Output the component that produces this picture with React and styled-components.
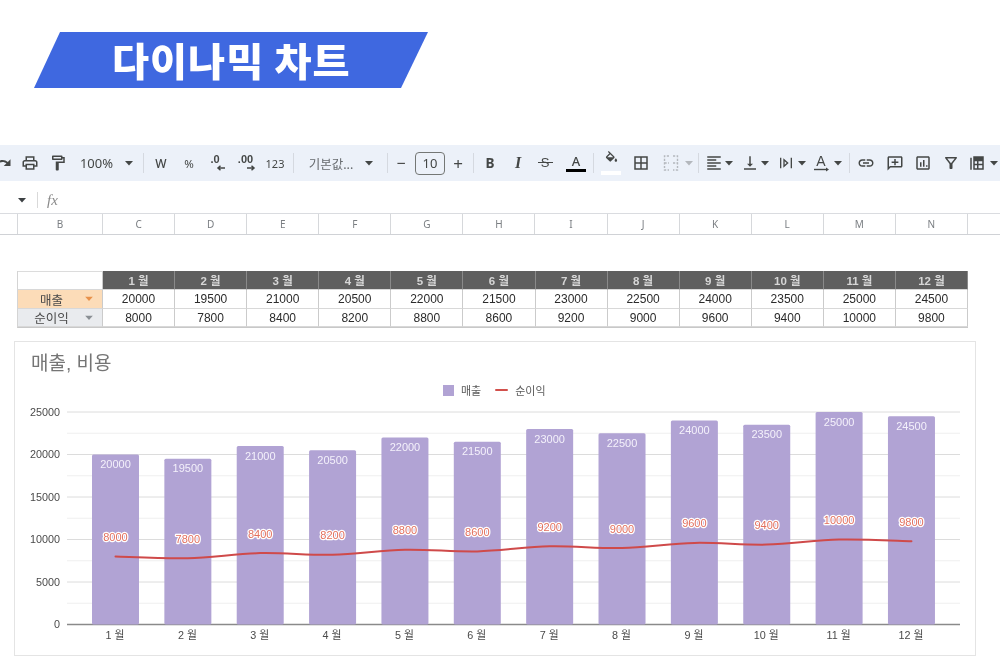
import React from 'react';
import styled, { createGlobalStyle } from 'styled-components';

const MONTHS = ['1 월', '2 월', '3 월', '4 월', '5 월', '6 월', '7 월', '8 월', '9 월', '10 월', '11 월', '12 월'];
const SALES = [20000, 19500, 21000, 20500, 22000, 21500, 23000, 22500, 24000, 23500, 25000, 24500];
const PROFIT = [8000, 7800, 8400, 8200, 8800, 8600, 9200, 9000, 9600, 9400, 10000, 9800];
const COLUMNS = ['B', 'C', 'D', 'E', 'F', 'G', 'H', 'I', 'J', 'K', 'L', 'M', 'N'];

const PATHS = {
    redo: 'M18.4 10.6C16.55 8.99 14.15 8 11.5 8c-4.65 0-8.58 3.03-9.96 7.22L3.9 16c1.05-3.19 4.05-5.5 7.6-5.5 1.95 0 3.73.72 5.12 1.88L13 16h9V7l-3.6 3.6z',
    print: 'M19 8h-1V3H6v5H5c-1.66 0-3 1.34-3 3v6h4v4h12v-4h4v-6c0-1.66-1.34-3-3-3zM8 5h8v3H8V5zm8 12v2H8v-4h8v2zm2-2v-2H6v2H4v-4c0-.55.45-1 1-1h14c.55 0 1 .45 1 1v4h-2z',
    paint: 'M18 4V3c0-.55-.45-1-1-1H5c-.55 0-1 .45-1 1v4c0 .55.45 1 1 1h12c.55 0 1-.45 1-1V6h1v4H9v11c0 .55.45 1 1 1h2c.55 0 1-.45 1-1v-9h8V4h-3zm-2 2H6V4h10v2z',
    fill: 'M16.56 8.94L7.62 0 6.21 1.41l2.38 2.38-5.15 5.15c-.59.59-.59 1.54 0 2.12l5.5 5.5c.29.29.68.44 1.06.44s.77-.15 1.06-.44l5.5-5.5c.59-.58.59-1.53 0-2.12zM5.21 10L10 5.21 14.79 10H5.21zM19 11.5s-2 2.17-2 3.5c0 1.1.9 2 2 2s2-.9 2-2c0-1.33-2-3.5-2-3.5z',
    borders: 'M3 3v18h18V3H3zm8 16H5v-6h6v6zm0-8H5V5h6v6zm8 8h-6v-6h6v6zm0-8h-6V5h6v6z',
    align: 'M15 15H3v2h12v-2zm0-8H3v2h12V7zM3 13h18v-2H3v2zm0 8h18v-2H3v2zM3 3v2h18V3H3z',
    valign: 'M16 13h-3V3h-2v10H8l4 4 4-4zM4 19v2h16v-2H4z',
    link: 'M3.9 12c0-1.71 1.39-3.1 3.1-3.1h4V7H7c-2.76 0-5 2.24-5 5s2.24 5 5 5h4v-1.9H7c-1.71 0-3.1-1.39-3.1-3.1zM8 13h8v-2H8v2zm9-6h-4v1.9h4c1.71 0 3.1 1.39 3.1 3.1s-1.39 3.1-3.1 3.1h-4V17h4c2.76 0 5-2.24 5-5s-2.24-5-5-5z',
    comment: 'M20 3H4c-1.1 0-2 .9-2 2v17l4-4h14c1.1 0 2-.9 2-2V5c0-1.1-.9-2-2-2zm0 13H5.17L4 17.17V5h16v11zM11 6.5h2V10h3.5v2H13v3h-2v-3H7.5v-2H11z',
    chart: 'M19 3H5c-1.1 0-2 .9-2 2v14c0 1.1.9 2 2 2h14c1.1 0 2-.9 2-2V5c0-1.1-.9-2-2-2zm0 16H5V5h14v14zM8 11h2v6H8zm4-3h2v9h-2zm4 7h2v2h-2z',
    filter: 'M7 6h10l-5.01 6.3L7 6zm-2.75-.39C6.27 8.2 10 13 10 13v6c0 .55.45 1 1 1h2c.55 0 1-.45 1-1v-6s3.73-4.8 5.75-7.39C20.26 4.95 19.79 4 18.95 4H5.04c-.83 0-1.3.95-.79 1.61z',
    wrap: 'M3 4h2v16H3zM19 4h2v16h-2zM8 5l8 7-8 7zm2 4.4v5.2l3-2.6z',
    table: 'M7 3h14v18H7zm2 6.5v3.5h3V9.5zm5 0v3.5h5V9.5zM9 15v4h3v-4zm5 0v4h5v-4zM3 5h2v16H3z'
};

const GlobalStyle = createGlobalStyle`
    html, body {
        margin: 0;
        padding: 0;
        background-color: #ffffff;
    }
    body {
        font-family: "Liberation Sans", "Noto Sans CJK KR", sans-serif;
    }
`;

const Icon = ({ name, size = 18, color = '#444746' }) => (
    <svg width={size} height={size} viewBox="0 0 24 24" fill={color} fillRule="evenodd">
        <path d={PATHS[name]} />
    </svg>
);

const Caret = ({ color = '#444746' }) => (
    <svg width="8" height="5" viewBox="0 0 8 5" fill={color}>
        <path d="M0 0h8L4 4.5z" />
    </svg>
);

// decimal buttons: digits with a small arrow at their lower right
const DecimalIcon = ({ label, right }) => (
    <svg width="24" height="20" viewBox="0 0 24 20">
        <text x={right ? 11.5 : 10} y="10" textAnchor="middle" fontSize="11" fontWeight="700" fill="#444746" fontFamily="Liberation Sans">{label}</text>
        {right
            ? <path d="M13 15h7M17.5 12.8l2.5 2.2-2.5 2.2" stroke="#444746" strokeWidth="1.5" fill="none" />
            : <path d="M20 15h-7M15.5 12.8L13 15l2.5 2.2" stroke="#444746" strokeWidth="1.5" fill="none" />}
    </svg>
);

const MergeIcon = () => (
    <svg width="18" height="18" viewBox="0 0 18 18" fill="none" stroke="#b4b8bd" strokeWidth="1.4" strokeDasharray="2.2 1.4">
        <path d="M7 2H2.5v14H7M11 2h4.5v14H11" />
        <path d="M2.5 9H7M11 9h4.5" />
    </svg>
);

const RotateIcon = () => (
    <svg width="18" height="20" viewBox="0 0 18 20">
        <text x="8" y="13" textAnchor="middle" fontSize="14" fill="#444746" fontFamily="Liberation Sans">A</text>
        <path d="M1 16.5h12" stroke="#444746" strokeWidth="1.4" />
        <path d="M13 14.5l3 2-3 2z" fill="#444746" />
    </svg>
);

// c is the centre of the item on the page, w its width
const buildTools = () => [
    { c: 3, w: 18, el: <Icon name="redo" /> },
    { c: 30, w: 18, el: <Icon name="print" /> },
    { c: 58, w: 18, el: <Icon name="paint" /> },
    { c: 96.5, w: 36, el: <ToolText $size={13}>100%</ToolText> },
    { c: 129, w: 8, el: <Caret /> },
    { c: 143, w: 1, el: <Divider /> },
    { c: 161, w: 16, el: <ToolText $size={12} $weight={500}>W</ToolText> },
    { c: 189, w: 16, el: <ToolText $size={11.5}>%</ToolText> },
    { c: 217, w: 24, el: <DecimalIcon label=".0" /> },
    { c: 246, w: 24, el: <DecimalIcon label=".00" right /> },
    { c: 275, w: 22, el: <ToolText $size={11}>123</ToolText> },
    { c: 293, w: 1, el: <Divider /> },
    { c: 331, w: 50, el: <ToolText $size={12.5} $color="#666a6e">기본값...</ToolText> },
    { c: 369, w: 8, el: <Caret /> },
    { c: 387, w: 1, el: <Divider /> },
    { c: 401, w: 12, el: <ToolText $size={16}>−</ToolText> },
    { c: 430, w: 30, el: <SizeBox>10</SizeBox> },
    { c: 458, w: 14, el: <ToolText $size={17}>+</ToolText> },
    { c: 473, w: 1, el: <Divider /> },
    { c: 490, w: 14, el: <ToolText $size={13.5} $weight={700}>B</ToolText> },
    { c: 518, w: 14, el: <ToolText $size={16} $weight={700} $italic $serif>I</ToolText> },
    { c: 545, w: 15, el: <StrikeGlyph>S</StrikeGlyph> },
    { c: 576, w: 20, el: <TextColor>A</TextColor> },
    { c: 593, w: 1, el: <Divider /> },
    { c: 611, w: 20, el: <FillColor><Icon name="fill" size={15} /></FillColor> },
    { c: 641, w: 18, el: <Icon name="borders" /> },
    { c: 671, w: 18, el: <MergeIcon /> },
    { c: 689, w: 8, el: <Caret color="#b4b8bd" /> },
    { c: 698, w: 1, el: <Divider /> },
    { c: 714, w: 18, el: <Icon name="align" /> },
    { c: 729, w: 8, el: <Caret /> },
    { c: 750, w: 18, el: <Icon name="valign" /> },
    { c: 765, w: 8, el: <Caret /> },
    { c: 786, w: 16, el: <Icon name="wrap" size={16} /> },
    { c: 802, w: 8, el: <Caret /> },
    { c: 822, w: 18, el: <RotateIcon /> },
    { c: 838, w: 8, el: <Caret /> },
    { c: 849, w: 1, el: <Divider /> },
    { c: 866, w: 18, el: <Icon name="link" /> },
    { c: 895, w: 18, el: <Icon name="comment" /> },
    { c: 923, w: 18, el: <Icon name="chart" /> },
    { c: 951, w: 18, el: <Icon name="filter" /> },
    { c: 977, w: 18, el: <Icon name="table" /> },
    { c: 994, w: 8, el: <Caret /> }
];

// turn the wanted centres into a left gap for each item
function placeTools() {
    let right = 0;
    return buildTools().map((tool) => {
        const left = tool.c - tool.w / 2;
        const gap = left - right;
        right = left + tool.w;
        return { ...tool, gap };
    });
}

// chart geometry, in page pixels (the svg viewBox starts at the card's inner corner)
const BASE_Y = 624.5;
const MAX_Y = 412;
const valueY = (v) => BASE_Y - (v / 25000) * (BASE_Y - MAX_Y);
const barX = (i) => 115.5 + i * 72.36;

function smoothLine(values) {
    const pts = values.map((v, i) => [barX(i), valueY(v)]);
    let d = `M${pts[0][0]} ${pts[0][1]}`;
    for (let i = 0; i < pts.length - 1; i++) {
        const p0 = pts[i - 1] || pts[i];
        const p1 = pts[i];
        const p2 = pts[i + 1];
        const p3 = pts[i + 2] || p2;
        const c1x = p1[0] + (p2[0] - p0[0]) / 6;
        const c1y = p1[1] + (p2[1] - p0[1]) / 6;
        const c2x = p2[0] - (p3[0] - p1[0]) / 6;
        const c2y = p2[1] - (p3[1] - p1[1]) / 6;
        d += ` C${c1x} ${c1y} ${c2x} ${c2y} ${p2[0]} ${p2[1]}`;
    }
    return d;
}

function ComboChart() {
    const grid = [];
    for (let v = 0; v <= 25000; v += 2500) grid.push(v);
    return (
        <ChartSvg viewBox="15 400 960 255" width="960" height="255">
            {grid.map((v) => (
                <line
                    key={v}
                    x1="67"
                    x2="960"
                    y1={valueY(v)}
                    y2={valueY(v)}
                    stroke={v === 0 ? '#8a8a8a' : v % 5000 === 0 ? '#dcdcdc' : '#efefef'}
                    strokeWidth={v === 0 ? 1.5 : 1}
                />
            ))}
            {[0, 5000, 10000, 15000, 20000, 25000].map((v) => (
                <AxisText key={v} x="60" y={valueY(v) + 3.5} textAnchor="end">{v}</AxisText>
            ))}
            {SALES.map((v, i) => (
                <g key={MONTHS[i]}>
                    <rect x={barX(i) - 23.5} y={valueY(v)} width="47" height={BASE_Y - valueY(v)} rx="1.5" fill="#b1a3d4" />
                    <BarLabel x={barX(i)} y={valueY(v) + 13.5} textAnchor="middle">{v}</BarLabel>
                    <AxisText x={barX(i) - 0.5} y="638.5" textAnchor="middle">{MONTHS[i]}</AxisText>
                </g>
            ))}
            <path d={smoothLine(PROFIT)} fill="none" stroke="#cf4a4a" strokeWidth="2" strokeLinecap="round" />
            {PROFIT.map((v, i) => (
                <LineLabel key={i} x={barX(i)} y={valueY(v) - 15.5} textAnchor="middle">{v}</LineLabel>
            ))}
        </ChartSvg>
    );
}

export default function App() {
    return (
        <Page>
            <GlobalStyle />
            <Banner>
                <BannerTitle>다이나믹 차트</BannerTitle>
            </Banner>

            <Toolbar>
                {placeTools().map((tool) => (
                    <ToolSlot key={tool.c} $w={tool.w} $gap={tool.gap}>{tool.el}</ToolSlot>
                ))}
            </Toolbar>

            <FormulaBar>
                <Caret color="#3c4043" />
                <FormulaDivider />
                <FxLabel>fx</FxLabel>
            </FormulaBar>

            <ColumnHeader>
                <ColumnCell />
                {COLUMNS.map((c) => <ColumnCell key={c}>{c}</ColumnCell>)}
                <ColumnCell />
            </ColumnHeader>

            <DataTable>
                <CornerCell />
                {MONTHS.map((m) => <MonthCell key={m}>{m}</MonthCell>)}

                <LabelCell $bg="#fcdcb8">
                    매출
                    <LabelCaret><Caret color="#e8914a" /></LabelCaret>
                </LabelCell>
                {SALES.map((v, i) => <ValueCell key={i}>{v}</ValueCell>)}

                <LabelCell $bg="#e9ebee">
                    순이익
                    <LabelCaret><Caret color="#8a8f94" /></LabelCaret>
                </LabelCell>
                {PROFIT.map((v, i) => <ValueCell key={i}>{v}</ValueCell>)}
            </DataTable>

            <ChartCard>
                <ChartTitle>매출, 비용</ChartTitle>
                <Legend>
                    <LegendSwatch />
                    <LegendText>매출</LegendText>
                    <LegendLine />
                    <LegendText>순이익</LegendText>
                </Legend>
                <ComboChart />
            </ChartCard>
        </Page>
    );
}

/* Styled Components */
const Page = styled.div`
    width: 1000px;
    height: 667px;
    overflow: hidden;
    padding-top: 32px;
    box-sizing: border-box;
    background-color: #ffffff;
    filter: blur(0.3px);
`;

const Banner = styled.div`
    width: 394px;
    height: 56px;
    margin-left: 34px;
    display: flex;
    align-items: center;
    justify-content: center;
    background-color: #3f68e0;
    clip-path: polygon(26px 0, 100% 0, 367px 100%, 0 100%);
`;

const BannerTitle = styled.div`
    font-family: "Noto Sans CJK KR", sans-serif;
    font-size: 42px;
    font-weight: 900;
    line-height: 56px;
    color: #ffffff;
    letter-spacing: 1px;
    transform: translateY(-1px) scale(0.96, 0.92);
`;

const Toolbar = styled.div`
    height: 36px;
    margin-top: 57px;
    display: flex;
    align-items: center;
    overflow: hidden;
    background-color: #ecf1f9;
`;

const ToolSlot = styled.div`
    flex: none;
    width: ${(p) => p.$w}px;
    margin-left: ${(p) => p.$gap}px;
    display: flex;
    align-items: center;
    justify-content: center;
`;

const ToolText = styled.span`
    font-family: ${(p) => (p.$serif ? '"Liberation Serif", serif' : '"Noto Sans", "Noto Sans CJK KR", sans-serif')};
    font-size: ${(p) => p.$size}px;
    font-weight: ${(p) => p.$weight || 400};
    font-style: ${(p) => (p.$italic ? 'italic' : 'normal')};
    color: ${(p) => p.$color || '#444746'};
    white-space: nowrap;
`;

const Divider = styled.div`
    width: 1px;
    height: 20px;
    background-color: #d5d9e0;
`;

const SizeBox = styled.div`
    width: 30px;
    height: 23px;
    box-sizing: border-box;
    border: 1px solid #747775;
    border-radius: 4px;
    display: flex;
    align-items: center;
    justify-content: center;
    font-family: "Noto Sans", sans-serif;
    font-size: 13px;
    color: #444746;
`;

const StrikeGlyph = styled.span`
    font-size: 13px;
    line-height: 16px;
    color: #444746;
    width: 15px;
    text-align: center;
    background: linear-gradient(#444746, #444746) center / 100% 1.4px no-repeat;
`;

const TextColor = styled.div`
    width: 20px;
    display: flex;
    flex-direction: column;
    align-items: center;
    font-family: "Noto Sans", sans-serif;
    font-size: 13px;
    font-weight: 500;
    line-height: 15px;
    color: #444746;
    border-bottom: 3.5px solid #000000;
`;

const FillColor = styled.div`
    width: 20px;
    height: 24px;
    display: flex;
    justify-content: center;
    background: linear-gradient(#ffffff, #ffffff) bottom / 100% 4px no-repeat;
`;

const FormulaBar = styled.div`
    height: 32px;
    box-sizing: border-box;
    padding: 6px 0 0 18px;
    display: flex;
    align-items: center;
    background-color: #ffffff;
`;

const FormulaDivider = styled.div`
    width: 1px;
    height: 16px;
    margin-left: 11px;
    background-color: #d9d9d9;
`;

const FxLabel = styled.span`
    margin-left: 9px;
    font-family: "Liberation Serif", serif;
    font-style: italic;
    font-size: 15px;
    color: #8a8a8a;
`;

const ColumnHeader = styled.div`
    height: 22px;
    box-sizing: border-box;
    display: grid;
    grid-template-columns: 18px 85px repeat(12, 72.08px) 1fr;
    border-top: 1px solid #dadce0;
    border-bottom: 1px solid #d0d2d6;
`;

const ColumnCell = styled.div`
    display: flex;
    align-items: center;
    justify-content: center;
    border-right: 1px solid #d6d8db;
    font-family: "Noto Sans", sans-serif;
    font-size: 10px;
    color: #7a7e82;

    &:last-child {
        border-right: none;
    }
`;

const DataTable = styled.div`
    width: 951px;
    margin: 36px 0 0 17px;
    display: grid;
    grid-template-columns: 85px repeat(12, 1fr);
    grid-template-rows: 19px 19px 18px;
    box-sizing: border-box;
    border-left: 1px solid #d4d4d4;
    border-bottom: 1px solid #c8c8c8;
`;

const TableCell = styled.div`
    display: flex;
    align-items: center;
    justify-content: center;
    box-sizing: border-box;
    border-right: 1px solid #cbcbcb;
    border-bottom: 1px solid #d8d8d8;
    font-size: 12px;
`;

const CornerCell = styled(TableCell)`
    border-top: 1px solid #dcdcdc;
`;

const MonthCell = styled(TableCell)`
    background-color: #5f5f5f;
    color: #d6d6d6;
    font-weight: 700;
    font-size: 11.5px;
    border-right-color: #8a8a8a;
`;

const LabelCell = styled(TableCell)`
    position: relative;
    padding-right: 17px;
    background-color: ${(p) => p.$bg};
    color: #4a4a4a;
    font-size: 12.5px;
`;

const LabelCaret = styled.span`
    position: absolute;
    right: 9px;
    top: 50%;
    display: flex;
    transform: translateY(-50%);
`;

const ValueCell = styled(TableCell)`
    color: #2b2b2b;
`;

const ChartCard = styled.div`
    width: 962px;
    height: 315px;
    margin: 13px 0 0 14px;
    box-sizing: border-box;
    border: 1px solid #e4e4e4;
    display: flex;
    flex-direction: column;
`;

const ChartTitle = styled.div`
    flex: none;
    padding: 10px 0 0 16px;
    height: 26px;
    font-size: 19px;
    line-height: 24px;
    color: #757575;
`;

const Legend = styled.div`
    flex: none;
    height: 20px;
    padding: 2px 0 0 428px;
    display: flex;
    align-items: center;
`;

const LegendSwatch = styled.div`
    width: 11px;
    height: 11px;
    background-color: #b1a3d4;
`;

const LegendText = styled.span`
    margin-left: 7px;
    font-size: 11px;
    color: #5a5a5a;
`;

const LegendLine = styled.div`
    width: 13px;
    height: 2.5px;
    margin-left: 14px;
    border-radius: 2px;
    background-color: #d2504c;
`;

const ChartSvg = styled.svg`
    display: block;
    flex: none;
`;

const AxisText = styled.text`
    font-size: 10.8px;
    fill: #4a4a4a;
`;

const BarLabel = styled.text`
    font-size: 11px;
    fill: #f4f1fb;
`;

const LineLabel = styled.text`
    font-size: 11px;
    fill: #e2705f;
    stroke: #ffffff;
    stroke-width: 2.5px;
    paint-order: stroke;
    stroke-linejoin: round;
`;
